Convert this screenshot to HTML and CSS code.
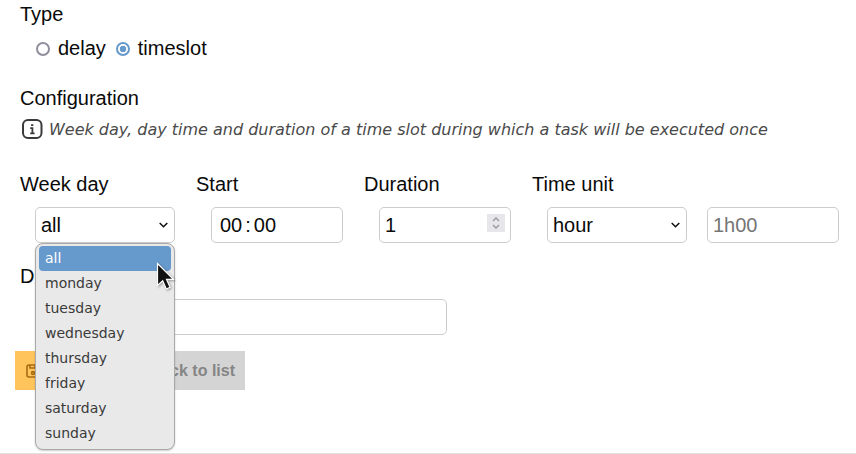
FILE: index.html
```html
<!DOCTYPE html>
<html lang="en">
<head>
    <meta charset="UTF-8">
    <title>Task schedule</title>
    <link rel="stylesheet" href="styles.css">
</head>
<body>
    <form class="task-form">
        <div class="form-label">Type</div>
        <div class="radio-row">
            <span class="radio"></span><span class="radio-text">delay</span>
            <span class="radio radio-checked"></span><span class="radio-text">timeslot</span>
        </div>

        <div class="form-label config-label">Configuration</div>
        <div class="hint">
            <svg class="hint-icon" viewBox="0 0 24 24" width="24" height="24" fill="none" stroke="#3a3a3a" stroke-width="2">
                <rect x="3" y="3" width="18.5" height="18" rx="5"/>
                <path d="M10.2 11.2h2.2v5M10.2 16.4h4.4" stroke-width="1.8"/>
                <path d="M12.2 7.2v1.8" stroke-width="2.2"/>
            </svg>
            <span>Week day, day time and duration of a time slot during which a task will be executed once</span>
        </div>

        <div class="slot-row">
            <div class="slot-col col-day">
                <div class="form-label">Week day</div>
                <div class="field-wrap">
                    <select class="field">
                        <option>all</option>
                    </select>
                    <ul class="dropdown">
                        <li class="dropdown-active">all</li>
                        <li>monday</li>
                        <li>tuesday</li>
                        <li>wednesday</li>
                        <li>thursday</li>
                        <li>friday</li>
                        <li>saturday</li>
                        <li>sunday</li>
                    </ul>
                    <svg class="cursor" viewBox="0 0 20 30" width="20" height="30">
                        <path d="M1.5 1.5v22l5.2-4.8 3.6 8.3 3.800-1.700-3.600-8h6.900z" fill="#111" stroke="#fff" stroke-width="1.2"/>
                    </svg>
                </div>
            </div>
            <div class="slot-col col-start">
                <div class="form-label">Start</div>
                <div class="field time-field"><span>00</span><span class="time-sep">:</span><span>00</span></div>
            </div>
            <div class="slot-col col-duration">
                <div class="form-label">Duration</div>
                <input class="field" type="number" value="1">
            </div>
            <div class="slot-col col-unit">
                <div class="form-label">Time unit</div>
                <select class="field">
                    <option>hour</option>
                </select>
            </div>
            <div class="slot-col col-summary">
                <input class="field" type="text" placeholder="1h00">
            </div>
        </div>

        <div class="form-label desc-label">Description</div>
        <input class="field desc-input" type="text">

        <div class="actions">
            <button class="btn btn-save" type="button">
                <svg viewBox="0 0 16 16" width="16" height="16" fill="none" stroke="#a8690f" stroke-width="1.6">
                    <rect x="2" y="2" width="12" height="12" rx="2"/>
                    <path d="M5 2v3h5V2"/>
                    <circle cx="8" cy="10" r="1.4"/>
                </svg>
                <span>Save</span>
            </button>
            <button class="btn btn-back" type="button">Back to list</button>
        </div>
    </form>
    <div class="page-end"></div>
</body>
</html>
```

FILE: styles.css
```css
html, body {
    margin: 0;
    padding: 0;
}
body {
    height: 454px;
    overflow: hidden;
    background-color: white;
    color: #0a0a0a;
    font-family: 'Liberation Sans', Arial, sans-serif;
    font-size: 20px;
}
.task-form {
    height: 453px;
    padding: 3px 0 0 20px;
    box-sizing: border-box;
}
.form-label {
    height: 23px;
    line-height: 23px;
}
.radio-row {
    display: flex;
    align-items: center;
    height: 23px;
    margin-top: 11px;
    padding-left: 16px;
}
.radio {
    width: 14px;
    height: 14px;
    box-sizing: border-box;
    border: 2px solid #8f8f9d;
    border-radius: 50%;
    margin-right: 8px;
}
.radio-checked {
    border-color: #6699cc;
    background: radial-gradient(circle, #6699cc 0 3px, white 3.6px);
}
.radio-text {
    margin-right: 10px;
}
.config-label {
    margin-top: 27px;
}
.hint {
    display: flex;
    align-items: center;
    gap: 5px;
    margin-top: 7px;
    height: 24px;
    color: #4a4a4a;
    font-family: 'DejaVu Sans', sans-serif;
    font-size: 16px;
    font-style: italic;
}
.slot-row {
    display: flex;
    margin-top: 32px;
}
.slot-col .form-label {
    margin-bottom: 11px;
}
.col-day {
    width: 176px;
}
.col-start, .col-duration {
    width: 168px;
}
.col-unit {
    width: 175px;
}
.col-summary {
    padding-top: 34px;
}
.field-wrap {
    position: relative;
    margin-left: 15px;
    width: 140px;
}
.field {
    display: block;
    height: 36px;
    box-sizing: border-box;
    border: 1px solid #cccccc;
    border-radius: 5px;
    background-color: white;
    padding: 0 5px;
    color: #0a0a0a;
    font-family: 'Liberation Sans', Arial, sans-serif;
    font-size: 20px;
    outline: none;
}
select.field {
    width: 140px;
    appearance: none;
    background-image: url("data:image/svg+xml,%3Csvg xmlns='http://www.w3.org/2000/svg' width='9' height='6'%3E%3Cpath d='M.7 1l3.800 3.800L8.300 1' fill='none' stroke='%23111' stroke-width='1.5'/%3E%3C/svg%3E");
    background-repeat: no-repeat;
    background-position: right 6px center;
}
.col-unit select.field {
    margin-left: 15px;
}
.time-field {
    display: flex;
    align-items: center;
    width: 132px;
    margin-left: 15px;
    padding-left: 8px;
}
.time-sep {
    margin: 0 3px;
}
input[type="number"].field {
    width: 132px;
    margin-left: 15px;
}
input[type="number"].field::-webkit-inner-spin-button {
    -webkit-appearance: none;
    opacity: 1;
    width: 18px;
    height: 18px;
    background: #e6e6eb url("data:image/svg+xml,%3Csvg xmlns='http://www.w3.org/2000/svg' width='18' height='18'%3E%3Cpath d='M6 7l3-3 3 3M6 11l3 3 3-3' fill='none' stroke='%23999' stroke-width='1.3'/%3E%3C/svg%3E") no-repeat center;
}
.col-summary .field {
    width: 132px;
}
.field::placeholder {
    color: #757575;
}
.dropdown {
    position: absolute;
    top: 36px;
    left: 0;
    width: 140px;
    box-sizing: border-box;
    margin: 0;
    padding: 2px 3px 3px;
    list-style: none;
    background-color: #e9e9e9;
    border: 1px solid #a9a9a9;
    border-radius: 8px;
    box-shadow: 0 1px 2px rgba(0, 0, 0, 0.2);
    color: #3a3a3a;
    font-family: 'DejaVu Sans', sans-serif;
    font-size: 14px;
}
.dropdown li {
    height: 25px;
    line-height: 25px;
    padding-left: 6px;
}
.dropdown .dropdown-active {
    background-color: #6699cc;
    border-radius: 4px;
    color: white;
}
.cursor {
    position: absolute;
    top: 55px;
    left: 121px;
    filter: drop-shadow(1px 1px 1px rgba(0, 0, 0, 0.35));
}
.desc-label {
    margin-top: 22px;
}
.desc-input {
    width: 412px;
    margin-left: 15px;
    margin-top: 11px;
}
.actions {
    display: flex;
    margin-top: 16px;
    margin-left: -5px;
}
.btn {
    display: flex;
    align-items: center;
    height: 39px;
    border: none;
    padding: 0;
    font-family: 'Liberation Sans', Arial, sans-serif;
    font-size: 16px;
    font-weight: bold;
}
.btn-save {
    width: 115px;
    padding-left: 10px;
    gap: 6px;
    background-color: #ffc55c;
    color: #a8690f;
}
.btn-back {
    width: 115px;
    justify-content: flex-end;
    padding-right: 10px;
    background-color: #d4d4d4;
    color: #858585;
}
.page-end {
    border-top: 1px solid #e0e0e0;
}
```
